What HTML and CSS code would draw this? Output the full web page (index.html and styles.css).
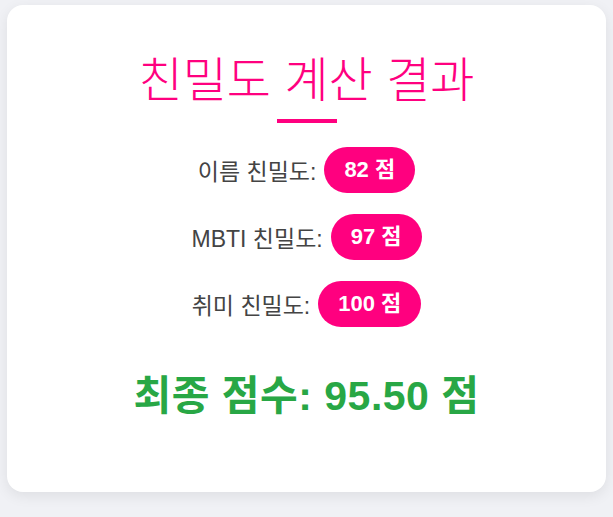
FILE: index.html
```html
<!DOCTYPE html>
<html lang="ko">
<head>
<meta charset="utf-8">
<title>친밀도 계산 결과</title>
<link rel="stylesheet" href="styles.css">
</head>
<body>
<div class="card">
  <h1 class="title">친밀도 계산 결과</h1>
  <div class="divider"></div>
  <div class="rows">
    <p class="row">이름 친밀도: <span class="badge">82 점</span></p>
    <p class="row">MBTI 친밀도: <span class="badge">97 점</span></p>
    <p class="row">취미 친밀도: <span class="badge">100 점</span></p>
  </div>
  <p class="final">최종 점수: 95.50 점</p>
</div>
</body>
</html>
```

FILE: styles.css
```css
html, body {
  margin: 0;
  padding: 0;
}
body {
  background: #f0f1f5;
  padding: 5px 7px 25px;
  font-family: "Liberation Sans", Arial, "Noto Sans CJK KR", sans-serif;
}
.card {
  background: #ffffff;
  border-radius: 16px;
  box-shadow: 0 4px 14px rgba(0, 0, 0, 0.08);
  height: 487px;
  box-sizing: border-box;
  padding: 42px 20px 0;
  text-align: center;
}
.title {
  margin: 0;
  font-size: 48px;
  font-weight: 300;
  line-height: 58px;
  color: #ff007f;
  font-family: "Noto Sans CJK KR", sans-serif;
}
.divider {
  width: 60px;
  height: 4px;
  background: #ff007f;
  margin: 14px auto 0;
}
.rows {
  display: flex;
  flex-direction: column;
  align-items: center;
  gap: 21px;
  margin-top: 24px;
}
.row {
  margin: 0;
  font-size: 23px;
  color: #444444;
  display: flex;
  align-items: center;
  gap: 8px;
}
.badge {
  display: inline-block;
  background: #ff007f;
  color: #ffffff;
  font-size: 22px;
  font-weight: bold;
  padding: 10px 20px;
  border-radius: 24px;
  line-height: 26px;
}
.final {
  margin: 46px 0 0;
  font-size: 41px;
  line-height: 46px;
  letter-spacing: 0.5px;
  font-weight: bold;
  color: #28a745;
}
```
